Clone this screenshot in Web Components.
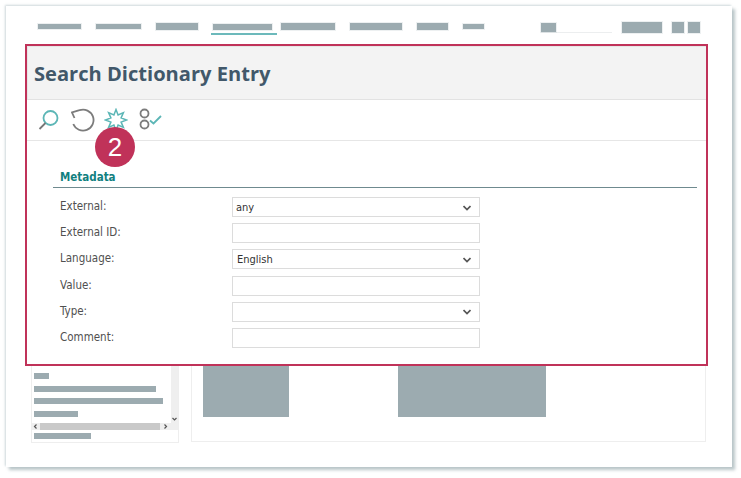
<!DOCTYPE html>
<html lang="en">
<head>
<meta charset="utf-8">
<title>Search Dictionary Entry</title>
<style>
    html, body {
        margin: 0;
        height: 100%;
        background: #fff;
    }
    body {
        box-sizing: border-box;
        padding: 6px 0 0 6px;
        font-family: "DejaVu Sans Condensed", "DejaVu Sans", sans-serif;
    }
</style>
</head>
<body>
<app-frame>
    <top-nav slot="nav"></top-nav>
    <back-panels slot="panels"></back-panels>
    <search-dialog slot="dialog" heading="Search Dictionary Entry">
        <form-row label="External:" type="select" value="any" inset="3"></form-row>
        <form-row label="External ID:"></form-row>
        <form-row label="Language:" type="select" value="English"></form-row>
        <form-row label="Value:"></form-row>
        <form-row label="Type:" type="select"></form-row>
        <form-row label="Comment:"></form-row>
    </search-dialog>
</app-frame>

<script>
const BAR = '#9cabb0';

class AppFrame extends HTMLElement {
    constructor() {
        super();
        this.attachShadow({mode: 'open'}).innerHTML = `
<style>
    :host {
        display: flex;
        flex-direction: column;
        justify-content: space-between;
        position: relative;
        box-sizing: border-box;
        width: 726px;
        height: 461px;
        padding-bottom: 24px;
        background: #fff;
        box-shadow: 3px 3px 3px rgba(140, 160, 165, .6), -1px -1px 2px rgba(160, 178, 183, .5);
    }
    ::slotted([slot=dialog]) {
        position: absolute;
        left: 19px;
        top: 38px;
    }
</style>
<slot name="nav"></slot>
<slot name="panels"></slot>
<slot name="dialog"></slot>`;
    }
}

class TopNav extends HTMLElement {
    constructor() {
        super();
        const left = [[32, 43, 5], [15, 45, 5], [15, 42, 7], [15, 59, 6], [9, 54, 7], [15, 52, 7], [15, 31, 7], [15, 21, 5]];
        const bars = left.map(([gap, w, h], i) =>
            `<i class="${i === 3 ? 'active' : ''}" style="margin-left:${gap}px;width:${w}px;height:${h}px"></i>`).join('');
        this.attachShadow({mode: 'open'}).innerHTML = `
<style>
    :host {
        display: flex;
        height: 28px;
        padding-top: 16px;
        box-sizing: content-box;
    }
    .left {
        display: flex;
        align-items: center;
        height: 9px;
    }
    .right {
        display: flex;
        align-items: flex-start;
    }
    i {
        display: block;
        position: relative;
        flex: none;
        background: ${BAR};
        box-shadow: 0 0 0 1px rgba(156, 171, 176, .18);
    }
    i.active::after {
        content: "";
        position: absolute;
        left: -2px;
        right: -5px;
        bottom: -5px;
        height: 2px;
        background: #6cb9bb;
    }
    .search {
        display: flex;
        align-items: flex-end;
        width: 71px;
        height: 11px;
        margin-left: 57px;
        border-bottom: 1px solid #eceeef;
        box-sizing: border-box;
    }
    .search i {
        width: 15px;
        height: 9px;
    }
</style>
<div class="left">${bars}</div>
<div class="right">
    <div class="search"><i></i></div>
    <i style="margin-left:10px;width:40px;height:11px"></i>
    <i style="margin-left:10px;width:12px;height:11px"></i>
    <i style="margin-left:4px;width:12px;height:11px"></i>
</div>`;
    }
}

class BackPanels extends HTMLElement {
    constructor() {
        super();
        this.attachShadow({mode: 'open'}).innerHTML = `
<style>
    :host {
        display: grid;
        grid-template-columns: 148px 515px;
        column-gap: 12px;
        margin-left: 25px;
        height: 150px;
    }
    .tree, .main {
        box-sizing: border-box;
        border: 1px solid #eeeeee;
    }
    .tree {
        display: flex;
        flex-direction: column;
    }
    .view {
        flex: 1;
        display: grid;
        grid-template-columns: 139px 7px;
        grid-template-rows: 1fr 7px;
        min-height: 0;
    }
    .list {
        display: flex;
        flex-direction: column;
        justify-content: flex-end;
        gap: 6.7px;
        padding: 0 0 6px 2px;
    }
    .list i, .foot i, .main i {
        display: block;
        background: ${BAR};
    }
    .list i, .foot i {
        height: 6px;
    }
    .vbar {
        grid-column: 2;
        grid-row: 1 / span 2;
        display: flex;
        align-items: flex-end;
        justify-content: center;
        padding-bottom: 9px;
        background: #efefef;
    }
    .hbar {
        display: flex;
        align-items: center;
        justify-content: space-between;
        height: 7px;
        background: #efefef;
    }
    .hbar b {
        display: block;
        width: 120px;
        height: 7px;
        background: #c9c9c9;
    }
    svg {
        display: block;
        fill: none;
        stroke: #555;
        stroke-width: 1.2;
    }
    .foot {
        padding: 3px 0 3px 2px;
    }
    .main {
        display: flex;
        align-items: flex-end;
        gap: 109px;
        padding: 0 0 24px 11px;
        margin-bottom: 1px;
    }
    .main i {
        flex: none;
        height: 100px;
    }
</style>
<div class="tree">
    <div class="view">
        <div class="list">
            <i style="width:123px"></i>
            <i style="width:15px"></i>
            <i style="width:122px"></i>
            <i style="width:129px"></i>
            <i style="width:44px"></i>
        </div>
        <div class="vbar"><svg width="5" height="4" viewBox="0 0 5 4"><path d="M.5 1 2.5 3 4.5 1"/></svg></div>
        <div class="hbar">
            <svg width="7" height="5" viewBox="0 0 7 5"><path d="M4.5 .5 2.5 2.5 4.5 4.5"/></svg>
            <b></b>
            <svg width="10" height="5" viewBox="0 0 10 5"><path d="M3.5 .5 5.5 2.5 3.5 4.5"/></svg>
        </div>
    </div>
    <div class="foot"><i style="width:57px"></i></div>
</div>
<div class="main">
    <i style="width:86px"></i>
    <i style="width:148px"></i>
</div>`;
    }
}

class SearchDialog extends HTMLElement {
    constructor() {
        super();
        const heading = this.getAttribute('heading');
        this.attachShadow({mode: 'open'}).innerHTML = `
<style>
    :host {
        display: flex;
        flex-direction: column;
        box-sizing: border-box;
        width: 683px;
        height: 322px;
        border: 2px solid #c03259;
        background: #fff;
    }
    header {
        box-sizing: border-box;
        height: 54px;
        padding-left: 6px;
        background: #f3f3f3;
        border-bottom: 1px solid #e2e2e2;
        border-top: 1px solid #e6e6e6;
        border-left: 1px solid #e6e6e6;
        display: flex;
        align-items: center;
    }
    h1 {
        margin: 0;
        font: 700 20.1px "Open Sans", sans-serif;
        color: #41586a;
    }
    .tools {
        position: relative;
        box-sizing: border-box;
        height: 41px;
        border-bottom: 1px solid #e6e6e6;
        display: flex;
        align-items: center;
        gap: 9px;
        padding-left: 11px;
    }
    .tools svg {
        display: block;
        flex: none;
        fill: none;
        stroke-width: 1.8;
    }
    .badge {
        position: absolute;
        left: 68px;
        top: 27px;
        width: 40px;
        height: 40px;
        border-radius: 50%;
        background: #c03259;
        color: #fff;
        font: 400 26px/40px "Liberation Sans", sans-serif;
        text-align: center;
    }
    section {
        padding: 29px 9px 0 26px;
    }
    h2 {
        margin: 0 0 9px;
        padding: 0 0 2px 7px;
        border-bottom: 1px solid #6f8a8f;
        font: 700 11.5px/15px "DejaVu Sans Condensed", "DejaVu Sans", sans-serif;
        color: #11807f;
    }
    .rows {
        display: flex;
        flex-direction: column;
        gap: 6.2px;
        padding-left: 7px;
    }
</style>
<header><h1>${heading}</h1></header>
<div class="tools">
    <svg width="24" height="24" viewBox="0 0 24 24">
        <circle cx="12.5" cy="10" r="7" stroke="#5cb6b6"/>
        <path d="M7.5 15 1.5 21" stroke="#777"/>
    </svg>
    <svg width="24" height="24" viewBox="0 0 24 24">
        <path d="M3.5 10 1 4.5 8.5 2.2A10.5 10.5 0 1 1 2.3 16" stroke="#7c7c7c"/>
    </svg>
    <svg width="24" height="24" viewBox="0 0 24 24">
        <path d="M12 1.5 14.1 6.9 19.4 4.6 17.1 9.9 22.5 12 17.1 14.1 19.4 19.4 14.1 17.1 12 22.5 9.9 17.1 4.6 19.4 6.9 14.1 1.5 12 6.9 9.9 4.6 4.6 9.9 6.9Z" stroke="#5cb6b6" stroke-width="1.5"/>
    </svg>
    <svg width="26" height="24" viewBox="0 0 26 24">
        <circle cx="7.5" cy="5.5" r="4" stroke="#7c7c7c"/>
        <circle cx="7.5" cy="16.5" r="4" stroke="#7c7c7c"/>
        <path d="M13 12.5 16.5 15.5 24 8" stroke="#5cb6b6"/>
    </svg>
    <div class="badge">2</div>
</div>
<section>
    <h2>Metadata</h2>
    <div class="rows"><slot></slot></div>
</section>`;
    }
}

class FormRow extends HTMLElement {
    constructor() {
        super();
        const isSelect = this.getAttribute('type') === 'select';
        const value = this.getAttribute('value') || '';
        const inset = this.getAttribute('inset') || '4';
        this.attachShadow({mode: 'open'}).innerHTML = `
<style>
    :host {
        display: grid;
        grid-template-columns: 172px 248px;
        height: 20px;
        font: 400 11.5px/16px "DejaVu Sans Condensed", "DejaVu Sans", sans-serif;
        color: #505050;
    }
    .label {
        padding-top: 1px;
    }
    .field {
        display: flex;
        align-items: center;
        justify-content: space-between;
        box-sizing: border-box;
        height: 20px;
        border: 1px solid #dcdcdc;
        padding: 1px 8px 0 ${inset}px;
        font-size: 11px;
        color: #333;
    }
    svg {
        display: block;
        fill: none;
        stroke: #555;
        stroke-width: 1.7;
    }
</style>
<span class="label">${this.getAttribute('label')}</span>
<div class="field"><span>${value}</span>${isSelect ? '<svg width="8" height="6" viewBox="0 0 8 6"><path d="M.5 1 4 4.5 7.5 1"/></svg>' : ''}</div>`;
    }
}

customElements.define('app-frame', AppFrame);
customElements.define('top-nav', TopNav);
customElements.define('back-panels', BackPanels);
customElements.define('search-dialog', SearchDialog);
customElements.define('form-row', FormRow);
</script>
</body>
</html>
